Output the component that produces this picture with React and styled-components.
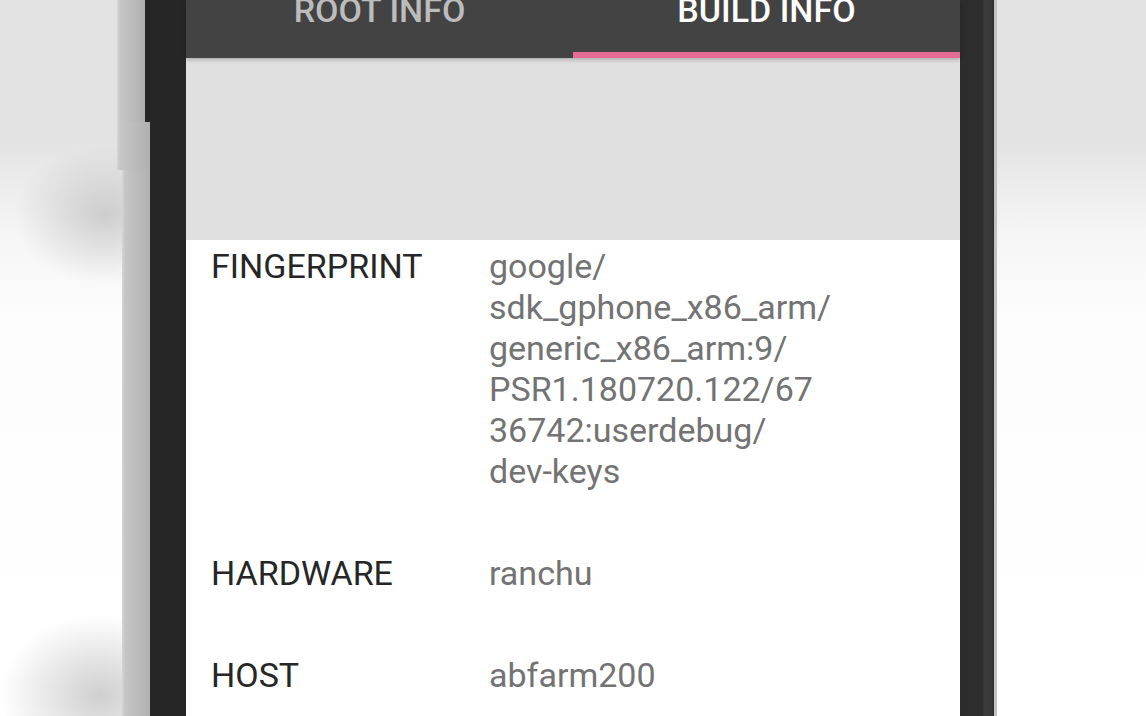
import styled, { createGlobalStyle } from 'styled-components';

const GlobalStyle = createGlobalStyle`
  html, body {
    margin: 0;
    padding: 0;
  }
  body {
    font-family: Roboto, "Liberation Sans", Arial, sans-serif;
  }
`;

const Page = styled.div`
  width: 1146px;
  height: 716px;
  overflow: hidden;
  display: flex;
  background:
    radial-gradient(ellipse 90px 70px at 105px 215px, rgba(160, 160, 160, 0.45), rgba(160, 160, 160, 0)),
    radial-gradient(ellipse 100px 80px at 100px 695px, rgba(160, 160, 160, 0.5), rgba(160, 160, 160, 0)),
    linear-gradient(to bottom, #e3e3e3 0, #e3e3e3 140px, #f5f5f5 230px, #fdfdfd 320px, #ffffff 100%);
`;

const Margin = styled.div`
  width: ${(p) => p.w}px;
  flex-shrink: 0;
`;

const Rail = styled.div`
  width: 33px;
  display: flex;
  flex-direction: column;
  flex-shrink: 0;
`;

const RailPart = styled.div`
  height: ${(p) => (p.h ? `${p.h}px` : 'auto')};
  flex: ${(p) => (p.h ? 'none' : 1)};
  margin-left: ${(p) => p.inset || 0}px;
  border-right: ${(p) => (p.dark ? '5px solid #272727' : 'none')};
  background: linear-gradient(to right, #d6d6d6 0, #c6c6c6 3px, #bababa 60%, #b0b0b0 100%);
`;

const Bezel = styled.div`
  width: 36px;
  flex-shrink: 0;
  background: #262626;
`;

const RightBezel = styled.div`
  width: 34px;
  flex-shrink: 0;
  background: linear-gradient(to right, #2c2c2c 0, #2e2e2e 22px, #3a3a3a 24px, #393939 32px, #2a2a2a 34px);
`;

const Edge = styled.div`
  width: 3px;
  flex-shrink: 0;
  background: #c2c2c2;
`;

const Screen = styled.div`
  width: 774px;
  flex-shrink: 0;
  display: flex;
  flex-direction: column;
  background: #ffffff;
`;

const TabBar = styled.div`
  height: 58px;
  flex-shrink: 0;
  display: flex;
  background: #434343;
  box-shadow: 0 2px 4px rgba(0, 0, 0, 0.22);
  position: relative;
  z-index: 1;
`;

const Tab = styled.div`
  flex: 1;
  text-align: center;
  font-size: 34px;
  font-weight: 500;
  line-height: 21px;
  color: ${(p) => (p.active ? '#ffffff' : '#bcbcbc')};
  box-shadow: ${(p) => (p.active ? 'inset 0 -6px 0 #e56b95' : 'none')};
`;

const Header = styled.div`
  height: 182px;
  flex-shrink: 0;
  background: #e0e0e0;
`;

const List = styled.div`
  display: flex;
  flex-direction: column;
  flex-shrink: 0;
`;

const Row = styled.div`
  display: grid;
  grid-template-columns: 278px 1fr;
  padding: 6px 0 55px 25px;
  font-size: 34px;
  line-height: 41px;
`;

const Label = styled.div`
  color: #262626;
`;

const Value = styled.div`
  color: #737373;
  white-space: nowrap;
`;

const rows = [
  {
    label: 'FINGERPRINT',
    value: [
      'google/',
      'sdk_gphone_x86_arm/',
      'generic_x86_arm:9/',
      'PSR1.180720.122/67',
      '36742:userdebug/',
      'dev-keys',
    ],
  },
  { label: 'HARDWARE', value: ['ranchu'] },
  { label: 'HOST', value: ['abfarm200'] },
];

const App = () => {
  return (
    <>
      <GlobalStyle />
      <Page>
        <Margin w={117} />
        <Rail>
          <RailPart h={122} dark />
          <RailPart h={48} />
          <RailPart inset={5} />
        </Rail>
        <Bezel />
        <Screen>
          <TabBar>
            <Tab>ROOT INFO</Tab>
            <Tab active>BUILD INFO</Tab>
          </TabBar>
          <Header />
          <List>
            {rows.map((row) => (
              <Row key={row.label}>
                <Label>{row.label}</Label>
                <Value>
                  {row.value.map((line) => (
                    <div key={line}>{line}</div>
                  ))}
                </Value>
              </Row>
            ))}
          </List>
        </Screen>
        <RightBezel />
        <Edge />
      </Page>
    </>
  );
};

export default App;
